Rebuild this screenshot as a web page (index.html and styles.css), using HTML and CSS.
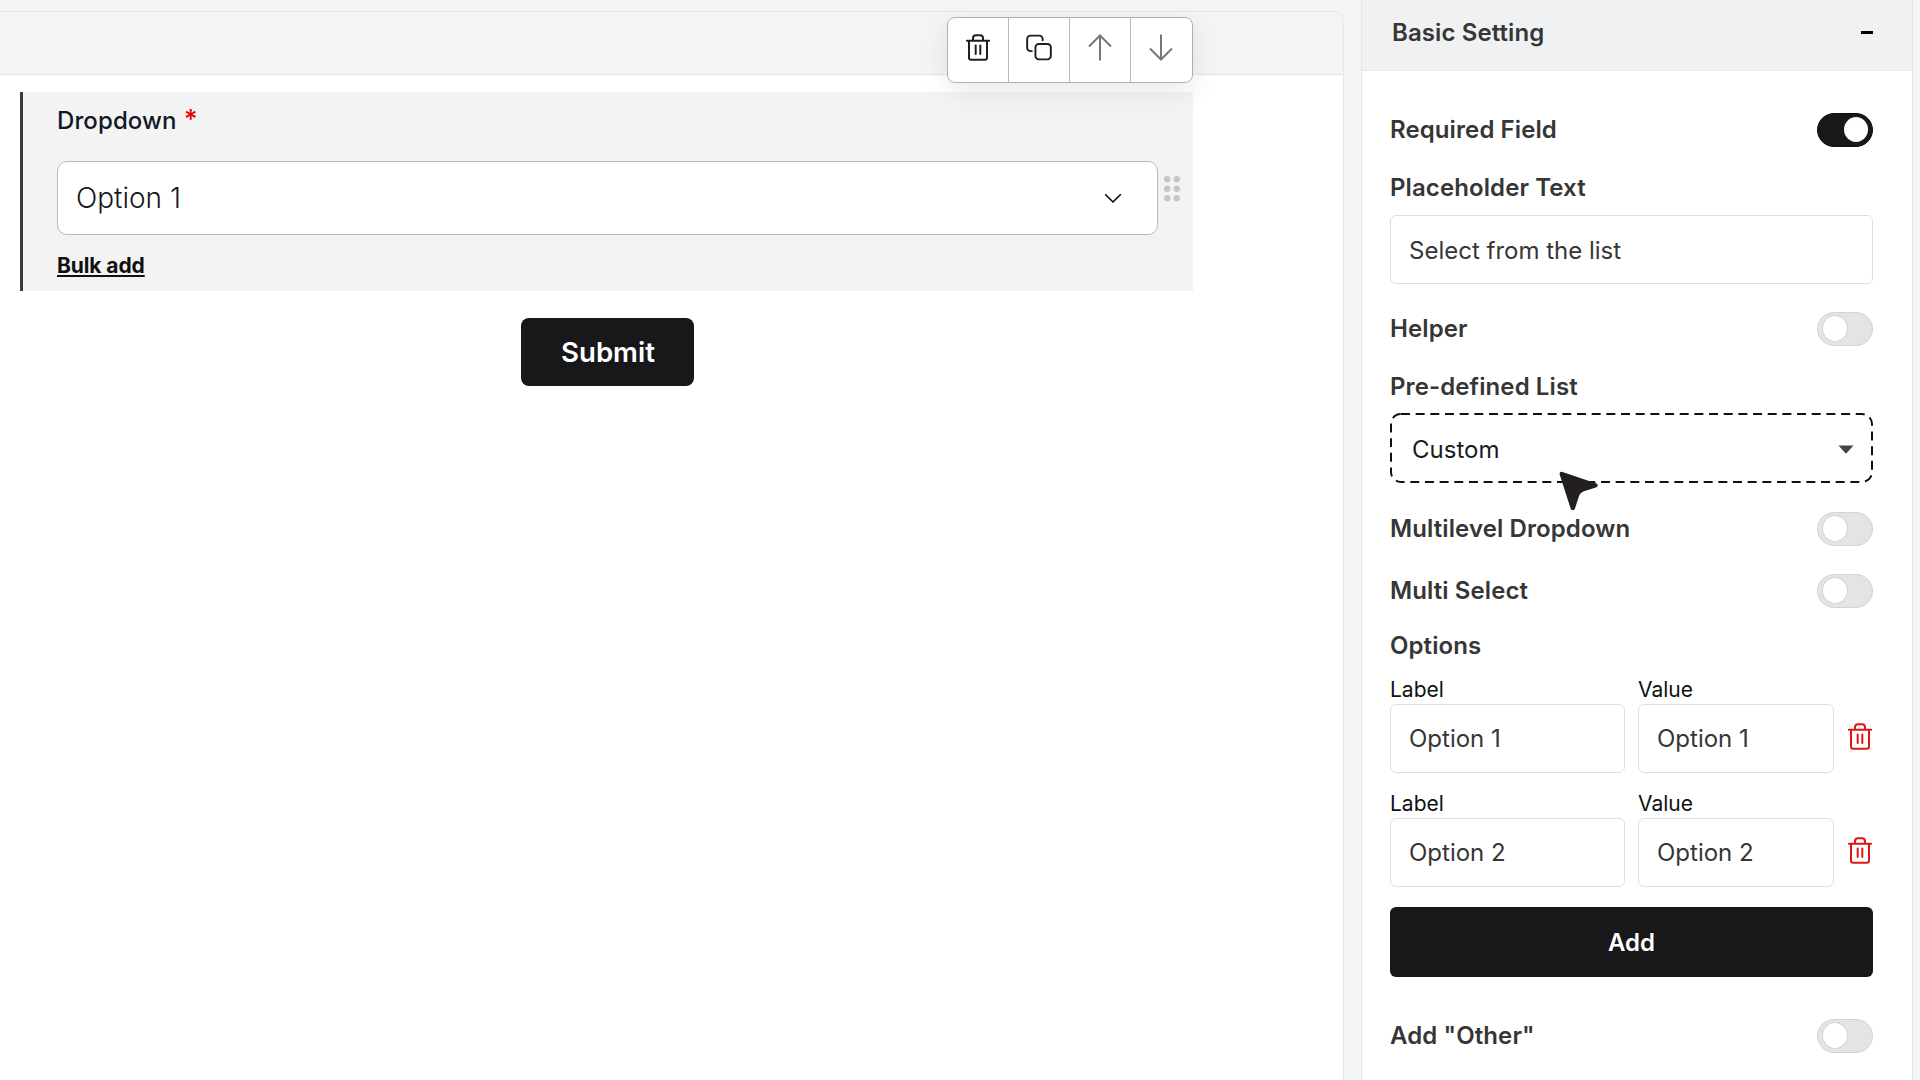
FILE: index.html
```html
<!DOCTYPE html>
<html lang="en">
<head>
<meta charset="utf-8">
<title>Form builder</title>
<link rel="stylesheet" href="styles.css">
</head>
<body>
<svg class="sprite" aria-hidden="true">
  <symbol id="trash" viewBox="0 0 24 27">
    <path d="M.9 6.7h22.2M3 6.7v17a2 2 0 0 0 2 2h14a2 2 0 0 0 2-2v-17M7 6.5V4.300a3 3 0 0 1 3-3h4a3 3 0 0 1 3 3v2.200M9.700 11.600v8.500M14.300 11.600v8.500"/>
  </symbol>
</svg>
<div class="app">
  <main class="canvas">
    <div class="canvas-head"></div>
    <section class="field">
      <div class="field-label">Dropdown <span class="star">*</span></div>
      <div class="select">
        <span>Option 1</span>
        <svg class="chevron" viewBox="0 0 18 11"><path d="M1.200 1.200 9 9l7.800-7.800"/></svg>
      </div>
      <a class="bulk">Bulk add</a>
      <svg class="grip" viewBox="0 0 16 26">
        <circle cx="3.200" cy="3.300" r="3.200"/><circle cx="12.700" cy="3.300" r="3.200"/>
        <circle cx="3.200" cy="12.800" r="3.200"/><circle cx="12.700" cy="12.800" r="3.200"/>
        <circle cx="3.200" cy="22.300" r="3.200"/><circle cx="12.700" cy="22.300" r="3.200"/>
      </svg>
      <div class="toolbar">
        <button class="tool"><svg class="tool-icon tool-trash"><use href="#trash"/></svg></button>
        <button class="tool"><svg class="tool-icon tool-copy" viewBox="0 0 27 27"><rect x="9.800" y="9.800" width="16" height="16" rx="3.500"/><path d="M6 17.300H4.700a3.500 3.500 0 0 1-3.500-3.500V4.700a3.500 3.500 0 0 1 3.500-3.500h9.100a3.500 3.500 0 0 1 3.500 3.500V6"/></svg></button>
        <button class="tool muted"><svg class="tool-icon tool-up" viewBox="0 0 24 27"><path d="M12 26.500V1.500M1 12.500l11-11 11 11"/></svg></button>
        <button class="tool muted"><svg class="tool-icon tool-down" viewBox="0 0 24 27"><path d="M12 .5v25M1 14.500l11 11 11-11"/></svg></button>
      </div>
    </section>
    <button class="submit">Submit</button>
  </main>

  <aside class="panel">
    <header class="panel-head"><h2>Basic Setting</h2><span class="minus"></span></header>
    <div class="settings">
      <div class="row row-required"><span>Required Field</span><span class="toggle on"></span></div>
      <div class="title title-spaced">Placeholder Text</div>
      <div class="input input-placeholder">Select from the list</div>
      <div class="row row-helper"><span>Helper</span><span class="toggle"></span></div>
      <div class="title title-spaced">Pre-defined List</div>
      <div class="predefined">
        <svg class="dash" viewBox="0 0 484 70"><rect x="1" y="1" width="482" height="68" rx="10"/></svg>
        <span>Custom</span>
        <svg class="caret" viewBox="0 0 16 9"><path d="M.5.500h15L8 8.700z"/></svg>
        <svg class="pointer" viewBox="0 0 40 40"><path d="M2.700.8 37.500 12.600Q40 14.300 37.500 16.200L25 20.300Q20.800 22 19.700 26L15.800 38Q13.700 40.500 11.800 38L.6 3.200Q.4.500 2.700.8Z"/></svg>
      </div>
      <div class="row row-multilevel"><span>Multilevel Dropdown</span><span class="toggle"></span></div>
      <div class="row row-multi"><span>Multi Select</span><span class="toggle"></span></div>
      <div class="title title-options">Options</div>
      <div class="option">
        <label class="cell"><span class="cap">Label</span><span class="input">Option 1</span></label>
        <label class="cell"><span class="cap">Value</span><span class="input">Option 1</span></label>
        <svg class="remove"><use href="#trash"/></svg>
      </div>
      <div class="option">
        <label class="cell"><span class="cap">Label</span><span class="input">Option 2</span></label>
        <label class="cell"><span class="cap">Value</span><span class="input">Option 2</span></label>
        <svg class="remove"><use href="#trash"/></svg>
      </div>
      <button class="add">Add</button>
      <div class="row row-other"><span>Add "Other"</span><span class="toggle"></span></div>
    </div>
  </aside>
</div>
</body>
</html>
```
FILE: styles.css
```css
* { box-sizing: border-box; }
body {
  margin: 0;
  background: #f4f5f7;
  font-family: Inter, "Liberation Sans", sans-serif;
  color: #363636;
}
button { font: inherit; padding: 0; margin: 0; border: 0; }
svg { display: block; }
.sprite { position: absolute; width: 0; height: 0; }

.app {
  display: flex;
  gap: 17px;
  width: 1920px;
  height: 1080px;
  overflow: hidden;
}

/* Form canvas */
.canvas {
  width: 1344px;
  height: 1080px;
  margin-top: 11px;
  background: #fff;
  border: 1px solid #e5e7eb;
  border-width: 1px 1px 0 0;
  border-top-right-radius: 10px;
}
.canvas-head {
  height: 63px;
  background: #f3f4f6;
  border-bottom: 1px solid #e2e4e7;
  border-top-right-radius: 9px;
}
.field {
  position: relative;
  display: flex;
  flex-direction: column;
  align-items: flex-start;
  width: 1172.500px;
  height: 199px;
  margin: 17px 0 0 20px;
  padding: 14px 0 0 34px;
  background: #f3f3f3;
  border-left: 3px solid #3a3b3c;
}
.field-label {
  font-size: 24px;
  line-height: 30px;
  font-weight: 500;
  letter-spacing: .1px;
  color: #111827;
}
.star { margin-left: 1px; color: #e80000; font-size: 26px; line-height: 20px; vertical-align: 1px; }
.select {
  display: flex;
  align-items: center;
  justify-content: space-between;
  width: 1101px;
  height: 74px;
  margin-top: 25px;
  padding: 0 35px 1px 18px;
  background: #fff;
  border: 1px solid #b4bac6;
  border-radius: 10px;
  font-size: 28px;
  font-weight: 350;
  color: #17181a;
}
.chevron { width: 18px; height: 11px; margin-top: 1px; fill: none; stroke: #000; stroke-width: 1.500; }
.bulk {
  margin-top: 18px;
  font-size: 21px;
  line-height: 26px;
  font-weight: 650;
  letter-spacing: -.1px;
  color: #111;
  text-decoration: underline;
}
.grip { position: absolute; right: 13px; top: 84px; width: 16px; height: 26px; fill: #c6c6c6; }
.toolbar {
  position: absolute;
  right: 0;
  top: -75px;
  display: flex;
  width: 246px;
  height: 66px;
  background: #fff;
  border: 1px solid #b0b0b0;
  border-radius: 8px;
  box-shadow: 0 8px 28px rgba(0, 0, 0, .09);
}
.tool {
  display: flex;
  flex: 1;
  justify-content: center;
  align-items: center;
  padding-bottom: 5px;
  background: none;
}
.tool + .tool { border-left: 1px solid #b8b8b8; }
.tool-icon { width: 24px; height: 27px; fill: none; stroke: #1f1f1f; stroke-width: 2; stroke-linecap: round; stroke-linejoin: round; }
.tool-copy { width: 26px; }
.muted .tool-icon { stroke: #777; stroke-width: 2; stroke-linecap: butt; stroke-linejoin: miter; }
.submit {
  display: block;
  width: 173px;
  height: 68px;
  margin: 27px 0 0 521px;
  padding-left: 1px;
  background: #18181a;
  border-radius: 8px;
  color: #fff;
  font-size: 27.6px;
  font-weight: 600;
}

/* Settings panel */
.panel {
  width: 552px;
  height: 1080px;
  background: #fff;
  border: solid #e5e7eb;
  border-width: 0 1px;
}
.panel-head {
  display: flex;
  align-items: center;
  justify-content: space-between;
  height: 71px;
  padding: 0 39px 5px 30px;
  background: #f0f1f3;
  border-bottom: 1px solid #e2e8f0;
}
.panel-head h2 { margin: 0; font-size: 24px; font-weight: 600; line-height: 30px; letter-spacing: .1px; }
.minus { width: 12px; height: 3px; background: #000; }
.settings { padding: 42px 39px 0 28px; }
.row {
  display: flex;
  justify-content: space-between;
  align-items: center;
  height: 35px;
  font-size: 24px;
  font-weight: 600;
  letter-spacing: .1px;
}
.row > span:first-child { margin-top: -1px; }
.row-required { height: 34px; }
.row-helper, .row-multi { margin-top: 27px; }
.row-multilevel { margin-top: 28px; }
.row-other { margin-top: 41px; }
.toggle {
  display: flex;
  align-items: center;
  width: 56px;
  height: 34px;
  padding-left: 4px;
  background: #e4e4e7;
  border: 1px solid #d4d4d7;
  border-radius: 17px;
}
.toggle::before {
  content: "";
  width: 24px;
  height: 25px;
  margin-top: -1px;
  background: #fff;
  border: 1px solid #d4d4d7;
  border-radius: 50%;
}
.toggle.on { justify-content: flex-end; padding: 0 4px 0 0; background: #18181a; border-color: #111; }
.toggle.on::before { border: 0; }
.title { font-size: 24px; line-height: 30px; font-weight: 600; letter-spacing: .1px; }
.title-spaced { margin-top: 26px; }
.title-options { margin-top: 23px; }
.input {
  display: flex;
  align-items: center;
  height: 69px;
  padding: 0 18px;
  background: #fff;
  border: 1px solid #d8dfe8;
  border-radius: 6px;
  font-size: 24px;
}
.input-placeholder { margin-top: 12px; padding-top: 1px; }
.predefined {
  position: relative;
  display: flex;
  align-items: center;
  justify-content: space-between;
  height: 70px;
  margin-top: 11px;
  padding: 2px 19px 0 22px;
  font-size: 24px;
  color: #1c1c1c;
}
.dash { position: absolute; left: 0; top: 0; width: 100%; height: 100%; fill: none; stroke: #111; stroke-width: 2; stroke-dasharray: 9 5.700; }
.caret { width: 16px; height: 9px; fill: #444; }
.pointer { position: absolute; left: 169px; top: 58px; width: 40px; height: 40px; fill: #231f20; }
.option {
  display: grid;
  grid-template-columns: 235px 196px 24px;
  column-gap: 13px;
  margin-top: 16px;
}
.option + .option { margin-top: 18px; }
.cell { display: flex; flex-direction: column; gap: 1px; }
.cap { font-size: 21px; line-height: 26px; color: #111; }
.remove {
  width: 24px;
  height: 27px;
  margin: 46px 0 0 1px;
  fill: none;
  stroke: #e01515;
  stroke-width: 2;
  stroke-linecap: round;
}
.add {
  display: block;
  width: 100%;
  height: 70px;
  margin-top: 20px;
  background: #18181a;
  border-radius: 6px;
  color: #fff;
  font-size: 24px;
  font-weight: 600;
}
```
